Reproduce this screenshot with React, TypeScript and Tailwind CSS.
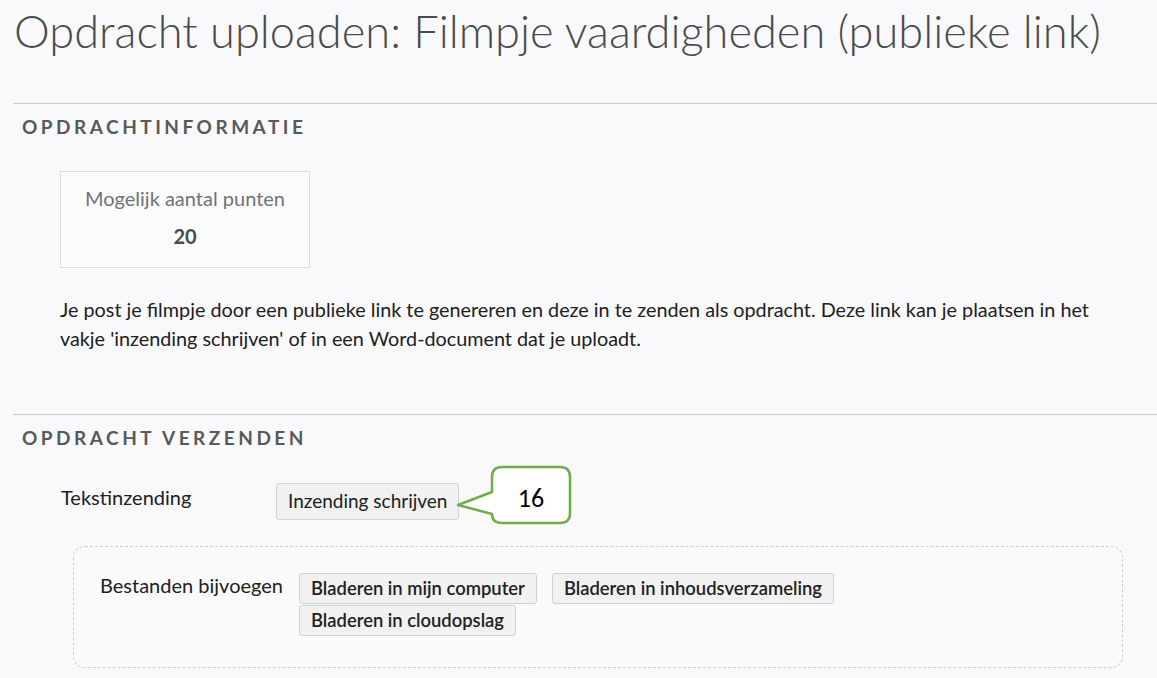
import type { ReactNode } from "react";

function Btn({ children, className = "" }: { children: ReactNode; className?: string }) {
  return (
    <button
      className={
        "rounded-[3px] border border-[#cfd2d6] bg-[#f1f1f1] px-[11px] text-[#202122] " +
        className
      }
    >
      {children}
    </button>
  );
}

function SectionHead({ children }: { children: ReactNode }) {
  return (
    <div className="border-t border-[#cdcdcd] pl-[9px] pt-[12px]">
      <h2 className="text-[19px] font-bold uppercase leading-[22px] tracking-[3.5px] text-[#565a5c]">
        {children}
      </h2>
    </div>
  );
}

export default function App() {
  return (
    <div className="min-h-[678px] w-[1157px] overflow-hidden bg-[#f9f9fb] pl-[13px] font-['Lato','Noto_Sans',sans-serif] text-[#494c4e]">
      <h1 className="pl-[1px] pt-[3px] text-[45.2px] font-light leading-[56px] text-[#494c4e]">
        Opdracht uploaden: Filmpje vaardigheden (publieke link)
      </h1>

      <div className="mt-[44px]">
        <SectionHead>Opdrachtinformatie</SectionHead>
        <div className="ml-[47px] mt-[33px] flex h-[97px] w-[250px] flex-col items-center border border-[#dcdcdc] bg-[#fbfbfc] pt-[14px]">
          <div className="text-[20px] leading-[24px] text-[#6e7376]">Mogelijk aantal punten</div>
          <div className="mt-[14px] text-[20px] font-bold leading-[24px] text-[#494c4e]">20</div>
        </div>
        <p className="ml-[47px] mt-[27px] w-[1050px] text-[19.8px] leading-[29px] text-[#202122]">
          Je post je filmpje door een publieke link te genereren en deze in te zenden als opdracht. Deze link kan je plaatsen in het
          vakje 'inzending schrijven' of in een Word-document dat je uploadt.
        </p>
      </div>

      <div className="mt-[61px]">
        <SectionHead>Opdracht verzenden</SectionHead>

        <div className="relative ml-[48px] mt-[34px] flex items-start">
          <div className="w-[215px] pt-[2px] text-[20px] leading-[24px] text-[#202122]">Tekstinzending</div>
          <Btn className="h-[37px] text-[19px] font-normal">Inzending schrijven</Btn>
          <svg
            className="absolute left-[395px] top-[-18px]"
            width="118"
            height="62"
            viewBox="0 0 118 62"
          >
            <path
              d="M 36 12 Q 36 2 46 2 L 104 2 Q 114 2 114 12 L 114 48 Q 114 58 104 58 L 46 58 Q 36 58 36 49 L 2 40 L 36 27 Z"
              fill="#ffffff"
              stroke="#70ad47"
              strokeWidth="2.5"
              strokeLinejoin="round"
            />
            <text
              x="75"
              y="42"
              textAnchor="middle"
              fontSize="26"
              fill="#000000"
              fontFamily="Carlito, 'Liberation Sans', sans-serif"
            >
              16
            </text>
          </svg>
        </div>

        <div className="ml-[60px] mt-[26px] flex h-[122px] w-[1050px] items-start rounded-[12px] border border-dashed border-[#cfcfcf] bg-[#fafafa] pl-[26px] pt-[26px]">
          <div className="w-[199px] text-[20px] leading-[24px] text-[#202122]">Bestanden bijvoegen</div>
          <div className="flex w-[580px] flex-wrap gap-x-[15px] gap-y-[1px]">
            <Btn className="h-[31px] text-[18.4px] font-semibold">Bladeren in mijn computer</Btn>
            <Btn className="h-[31px] text-[18.4px] font-semibold">Bladeren in inhoudsverzameling</Btn>
            <Btn className="h-[31px] text-[18.4px] font-semibold">Bladeren in cloudopslag</Btn>
          </div>
        </div>
      </div>
    </div>
  );
}
